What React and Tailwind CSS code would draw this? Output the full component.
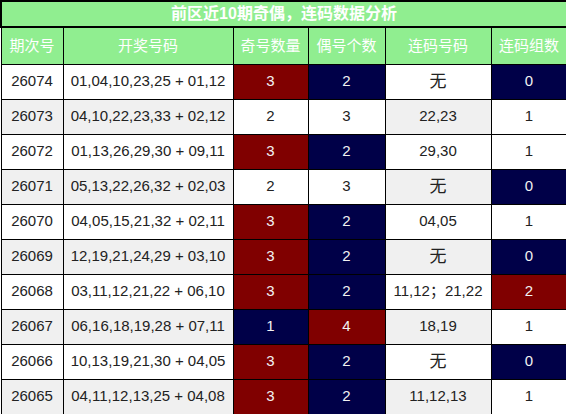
const rows = [
  ["26074", "01,04,10,23,25 + 01,12", 3, 2, "无", 0],
  ["26073", "04,10,22,23,33 + 02,12", 2, 3, "22,23", 1],
  ["26072", "01,13,26,29,30 + 09,11", 3, 2, "29,30", 1],
  ["26071", "05,13,22,26,32 + 02,03", 2, 3, "无", 0],
  ["26070", "04,05,15,21,32 + 02,11", 3, 2, "04,05", 1],
  ["26069", "12,19,21,24,29 + 03,10", 3, 2, "无", 0],
  ["26068", "03,11,12,21,22 + 06,10", 3, 2, "11,12；21,22", 2],
  ["26067", "06,16,18,19,28 + 07,11", 1, 4, "18,19", 1],
  ["26066", "10,13,19,21,30 + 04,05", 3, 2, "无", 0],
  ["26065", "04,11,12,13,25 + 04,08", 3, 2, "11,12,13", 1],
];

const RED = "bg-[#800000] text-[#f2f2f2]";
const BLUE = "bg-[#000048] text-[#f2f2f2]";
const PLAIN = "bg-white text-[#222]";

// odd count: 3 red, 1 blue; even count: 2 blue, 4 red
function oddClass(n) {
  if (n === 3) return RED;
  if (n === 1) return BLUE;
  return PLAIN;
}

function evenClass(n) {
  if (n === 2) return BLUE;
  if (n === 4) return RED;
  return PLAIN;
}

function groupClass(n) {
  if (n === 0) return BLUE;
  if (n >= 2) return RED;
  return PLAIN;
}

const headers = ["期次号", "开奖号码", "奇号数量", "偶号个数", "连码号码", "连码组数"];

export default function App() {
  return (
    <div className="w-[566px] h-[414px] bg-white font-['Liberation_Sans','Noto_Sans_CJK_SC',sans-serif]">
      <table className="w-[566px] table-fixed border-collapse text-[15px] text-center">
        <colgroup>
          <col className="w-[62px]" />
          <col className="w-[170px]" />
          <col className="w-[75px]" />
          <col className="w-[77px]" />
          <col className="w-[106px]" />
          <col className="w-[76px]" />
        </colgroup>
        <thead>
          <tr className="h-[26px]">
            <th
              colSpan={6}
              className="border-2 border-black bg-[#90ee90] text-white text-[16px] font-bold leading-none"
            >
              前区近10期奇偶，连码数据分析
            </th>
          </tr>
          <tr className="h-[37px]">
            {headers.map((h) => (
              <th
                key={h}
                className="border border-black bg-[#90ee90] text-white font-normal text-[15px]"
              >
                {h}
              </th>
            ))}
          </tr>
        </thead>
        <tbody>
          {rows.map((r, i) => {
            const stripe = i % 2 === 1 ? "bg-[#f0f0f0]" : "bg-white";
            return (
              <tr key={r[0]} className="h-[35px]">
                <td className={`border border-black text-[#222] ${stripe}`}>{r[0]}</td>
                <td className={`border border-black text-[#222] ${stripe}`}>{r[1]}</td>
                <td className={`border border-black ${oddClass(r[2])}`}>{r[2]}</td>
                <td className={`border border-black ${evenClass(r[3])}`}>{r[3]}</td>
                <td
                  className={`border border-black text-[#222] ${stripe} ${r[4] === "无" ? "text-[17px]" : ""}`}
                >
                  {r[4]}
                </td>
                <td className={`border border-black ${groupClass(r[5])}`}>{r[5]}</td>
              </tr>
            );
          })}
        </tbody>
      </table>
    </div>
  );
}
